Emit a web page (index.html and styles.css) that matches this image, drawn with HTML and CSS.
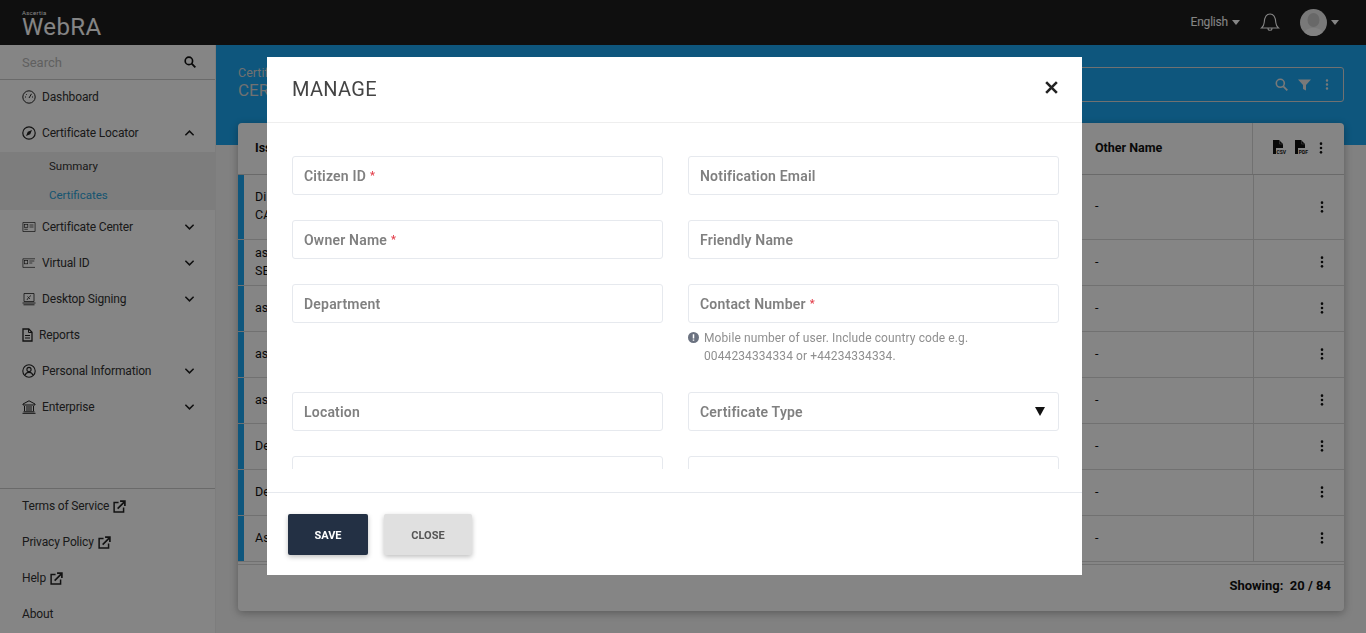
FILE: index.html
```html
<!DOCTYPE html>
<html lang="en">
<head>
<meta charset="utf-8">
<title>WebRA - Certificates</title>
<link rel="stylesheet" href="styles.css">
</head>
<body>
<svg class="defs" width="0" height="0" aria-hidden="true">
  <symbol id="chev-down" viewBox="0 0 12 8"><path d="M1.500 1.500 6 6l4.500-4.500" fill="none" stroke="currentColor" stroke-width="1.700"/></symbol>
  <symbol id="chev-up" viewBox="0 0 12 8"><path d="M1.500 6.500 6 2l4.500 4.500" fill="none" stroke="currentColor" stroke-width="1.700"/></symbol>
  <symbol id="ext" viewBox="0 0 14 14"><path d="M6 2.600H1.200v10.200h10.200V8" fill="none" stroke="currentColor" stroke-width="1.600"/><path d="M5 9.200 12 2.200M7.600 1.200h5.200v5.200" fill="none" stroke="currentColor" stroke-width="1.800"/></symbol>
  <symbol id="dots" viewBox="0 0 4 14"><circle cx="2" cy="2" r="1.600"/><circle cx="2" cy="7" r="1.600"/><circle cx="2" cy="12" r="1.600"/></symbol>
  <symbol id="file" viewBox="0 0 14 15"><path d="M1 0h6L11 4v4H4v6H1z"/><path d="M7.500 .5v3.500H11" fill="none" stroke="#888" stroke-width=".6"/></symbol>
</svg>

<div class="app">
  <header class="topbar">
    <div class="logo">
      <span class="logo-small">Ascertia</span>
      <span class="logo-main">WebRA</span>
    </div>
    <div class="top-actions">
      <span class="lang">English</span><span class="caret"></span>
      <svg class="bell" width="20" height="19" viewBox="0 0 20 19"><path d="M1.500 15c1.700-1.300 2.500-2.800 2.700-5.500C4.500 4.500 6.500 1 10 1s5.500 3.500 5.800 8.500c.2 2.700 1 4.200 2.700 5.500zM8 15.200c0 2.800 4 2.800 4 0" fill="none" stroke="#fff" stroke-width="1.100"/></svg>
      <span class="avatar"><svg width="27" height="27" viewBox="0 0 27 27"><ellipse cx="13.500" cy="11" rx="6" ry="7" fill="#c8c8c8"/><path d="M3 27c1-6 5-8 10.500-8S23 21 24 27z" fill="#f8f8f8"/></svg></span>
      <span class="caret"></span>
    </div>
  </header>

  <div class="layout">
    <aside class="sidebar">
      <div class="side-search">
        <span>Search</span>
        <svg width="12" height="12" viewBox="0 0 13 13"><circle cx="5.300" cy="5.300" r="4" fill="none" stroke="#111" stroke-width="1.800"/><path d="m8.300 8.300 4 4" stroke="#111" stroke-width="2"/></svg>
      </div>
      <nav class="nav">
        <a class="nav-item"><svg class="ico" viewBox="0 0 14 14"><circle cx="7" cy="7" r="6.200" fill="none" stroke="currentColor"/><path d="M7 8 9.500 3.800M3 7h1M10 7h1M4.300 4.300l.7.700" stroke="currentColor" fill="none"/></svg><span>Dashboard</span></a>
        <a class="nav-item"><svg class="ico" viewBox="0 0 14 14"><circle cx="7" cy="7" r="6.200" fill="none" stroke="currentColor" stroke-width="1.200"/><path d="M10 4 8.200 8.200 4 10l1.800-4.200z" fill="currentColor"/></svg><span>Certificate Locator</span><svg class="chev" viewBox="0 0 12 8"><use href="#chev-up"/></svg></a>
        <div class="subnav">
          <a class="sub-item">Summary</a>
          <a class="sub-item active">Certificates</a>
        </div>
        <a class="nav-item"><svg class="ico" viewBox="0 0 14 14"><path d="M.9 2.500h12.200v9H.9z" fill="none" stroke="currentColor" stroke-width=".7"/><rect x="2.300" y="4.300" width="3.500" height="3" fill="none" stroke="currentColor" stroke-width=".7"/><path d="M2.300 9.300h3.500M7.500 5h4M7.500 7h4" stroke="currentColor" stroke-width=".7"/></svg><span>Certificate Center</span><svg class="chev" viewBox="0 0 12 8"><use href="#chev-down"/></svg></a>
        <a class="nav-item"><svg class="ico" viewBox="0 0 14 14"><path d="M13 2.800H.9v8.600H13" fill="none" stroke="currentColor" stroke-width=".7"/><rect x="2.300" y="4.600" width="3.400" height="3.200" fill="none" stroke="currentColor" stroke-width=".7"/><path d="M7.300 5h5M7.300 7h3" stroke="currentColor" stroke-width=".7"/></svg><span>Virtual ID</span><svg class="chev" viewBox="0 0 12 8"><use href="#chev-down"/></svg></a>
        <a class="nav-item"><svg class="ico" viewBox="0 0 14 14"><path d="M2 1.500h10v8H2z" fill="none" stroke="currentColor" stroke-width=".8"/><path d="M5 8c.5-1.500 2-3 4-4.500M5.500 4.500 8 7" fill="none" stroke="currentColor" stroke-width=".8"/><path d="M.5 11h13M1.500 12.800h11" stroke="currentColor" stroke-width=".9"/></svg><span>Desktop Signing</span><svg class="chev" viewBox="0 0 12 8"><use href="#chev-down"/></svg></a>
        <a class="nav-item"><svg class="ico-file" viewBox="0 0 11 14"><path d="M1 1h5.800L10 4.200V13H1z" fill="none" stroke="currentColor" stroke-width="1.300"/><path d="M6.500 1v3.500H10M3 7.500h5M3 10h5" fill="none" stroke="currentColor"/></svg><span>Reports</span></a>
        <a class="nav-item"><svg class="ico" viewBox="0 0 14 14"><circle cx="7" cy="7" r="6.200" fill="none" stroke="currentColor" stroke-width="1.100"/><circle cx="7" cy="5.500" r="2.100" fill="none" stroke="currentColor" stroke-width="1.100"/><path d="M3.200 11c.6-2 2-2.600 3.800-2.600s3.200.6 3.800 2.600" fill="none" stroke="currentColor" stroke-width="1.100"/></svg><span>Personal Information</span><svg class="chev" viewBox="0 0 12 8"><use href="#chev-down"/></svg></a>
        <a class="nav-item"><svg class="ico" viewBox="0 0 14 14"><path d="M7 .8 13 4v1H1V4z" fill="none" stroke="currentColor"/><path d="M2.500 6v5M5 6v5M7 6v5M9 6v5M11.500 6v5M1.500 11.800h11M.5 13.300h13" stroke="currentColor"/></svg><span>Enterprise</span><svg class="chev" viewBox="0 0 12 8"><use href="#chev-down"/></svg></a>
      </nav>
      <div class="side-footer">
        <a class="foot-item">Terms of Service <svg class="ext" viewBox="0 0 14 14"><use href="#ext"/></svg></a>
        <a class="foot-item">Privacy Policy <svg class="ext" viewBox="0 0 14 14"><use href="#ext"/></svg></a>
        <a class="foot-item">Help <svg class="ext" viewBox="0 0 14 14"><use href="#ext"/></svg></a>
        <a class="foot-item">About</a>
      </div>
    </aside>

    <main class="main">
      <div class="band">
        <div class="crumbs">
          <div class="crumb">Certificates</div>
          <div class="page-title">CERTIFICATES</div>
        </div>
        <div class="toolbar">
          <svg width="13" height="13" viewBox="0 0 13 13"><circle cx="5.300" cy="5.300" r="4" fill="none" stroke="#e8e8e8" stroke-width="1.600"/><path d="m8.300 8.300 4 4" stroke="#e8e8e8" stroke-width="1.800"/></svg>
          <svg width="13" height="12" viewBox="0 0 13 12"><path d="M0 .5h13L8 6v5.500L5 10V6z" fill="#e8e8e8"/></svg>
          <svg class="toolbar-dots" width="4" height="11" viewBox="0 0 4 14" fill="#e8e8e8"><use href="#dots"/></svg>
        </div>
      </div>
      <section class="card">
        <div class="row head">
          <div class="cell first">Issuer</div>
          <div class="cell other">Other Name</div>
          <div class="cell actions head-actions">
            <span class="file-ico"><svg width="14" height="15" viewBox="0 0 14 15" fill="#111"><use href="#file"/></svg><b>CSV</b></span>
            <span class="file-ico"><svg width="14" height="15" viewBox="0 0 14 15" fill="#111"><use href="#file"/></svg><b>PDF</b></span>
            <svg class="dots" viewBox="0 0 4 14" fill="#111"><use href="#dots"/></svg>
          </div>
        </div>
        <div class="row tall"><div class="cell first">Di<br>CA</div><div class="cell other">-</div><div class="cell actions"><svg class="dots" viewBox="0 0 4 14" fill="#111"><use href="#dots"/></svg></div></div>
        <div class="row"><div class="cell first">as<br>SE</div><div class="cell other">-</div><div class="cell actions"><svg class="dots" viewBox="0 0 4 14" fill="#111"><use href="#dots"/></svg></div></div>
        <div class="row"><div class="cell first">as</div><div class="cell other">-</div><div class="cell actions"><svg class="dots" viewBox="0 0 4 14" fill="#111"><use href="#dots"/></svg></div></div>
        <div class="row"><div class="cell first">as</div><div class="cell other">-</div><div class="cell actions"><svg class="dots" viewBox="0 0 4 14" fill="#111"><use href="#dots"/></svg></div></div>
        <div class="row"><div class="cell first">as</div><div class="cell other">-</div><div class="cell actions"><svg class="dots" viewBox="0 0 4 14" fill="#111"><use href="#dots"/></svg></div></div>
        <div class="row"><div class="cell first">De</div><div class="cell other">-</div><div class="cell actions"><svg class="dots" viewBox="0 0 4 14" fill="#111"><use href="#dots"/></svg></div></div>
        <div class="row"><div class="cell first">De</div><div class="cell other">-</div><div class="cell actions"><svg class="dots" viewBox="0 0 4 14" fill="#111"><use href="#dots"/></svg></div></div>
        <div class="row"><div class="cell first">As</div><div class="cell other">-</div><div class="cell actions"><svg class="dots" viewBox="0 0 4 14" fill="#111"><use href="#dots"/></svg></div></div>
        <div class="card-foot">Showing:&nbsp; 20 / 84</div>
      </section>
    </main>
  </div>
</div>

<div class="backdrop"></div>

<div class="modal">
  <div class="modal-head">
    <h2>MANAGE</h2>
    <svg class="close" width="15" height="15" viewBox="0 0 14 14"><path d="m2 2 10 10M12 2 2 12" stroke="#222" stroke-width="2.400"/></svg>
  </div>
  <div class="modal-body">
    <div class="form-grid">
      <div class="field"><div class="input">Citizen ID<i>*</i></div></div>
      <div class="field"><div class="input">Notification Email</div></div>
      <div class="field"><div class="input">Owner Name<i>*</i></div></div>
      <div class="field"><div class="input">Friendly Name</div></div>
      <div class="field"><div class="input">Department</div></div>
      <div class="field">
        <div class="input">Contact Number<i>*</i></div>
        <div class="hint">
          <svg width="11" height="11" viewBox="0 0 11 11"><circle cx="5.500" cy="5.500" r="5.500" fill="#6b7280"/><path d="M5.500 2.300v4.200M5.500 7.500v1.300" stroke="#fff" stroke-width="1.500"/></svg>
          <span>Mobile number of user. Include country code e.g. 0044234334334 or +44234334334.</span>
        </div>
      </div>
      <div class="field"><div class="input">Location</div></div>
      <div class="field"><div class="input select">Certificate Type<span class="tri"></span></div></div>
      <div class="field"><div class="input"></div></div>
      <div class="field"><div class="input"></div></div>
    </div>
  </div>
  <div class="modal-foot">
    <button class="btn primary">SAVE</button>
    <button class="btn ghost">CLOSE</button>
  </div>
</div>
</body>
</html>
```

FILE: styles.css
```css
* { box-sizing: border-box; }
html, body { height: 100%; }
body { margin: 0; overflow: hidden; font-family: Roboto, "Liberation Sans", sans-serif; color: #222; background: #f7f7f7; }
a { color: inherit; text-decoration: none; }
.defs { position: absolute; }

.app { height: 633px; display: flex; flex-direction: column; }
.topbar { height: 45px; flex: none; background: #1e1e1e; display: flex; justify-content: space-between; align-items: center; padding: 0 27px 0 22px; }
.logo { display: flex; flex-direction: column; line-height: 1; color: #fff; padding-top: 3px; }
.logo-small { font-size: 6px; height: 5px; line-height: 5px; letter-spacing: .3px; margin-bottom: 1px; }
.logo-main { font-size: 24px; font-weight: 400; letter-spacing: .4px; line-height: 22px; color: #fff; }
.top-actions { display: flex; align-items: center; }
.lang { font-size: 12px; letter-spacing: -.2px; color: #fff; padding-bottom: 2px; }
.caret { width: 0; height: 0; border-left: 4px solid transparent; border-right: 4px solid transparent; border-top: 5px solid #fff; margin-left: 4px; }
.bell { margin: 0 20px 0 20px; }
.avatar { width: 27px; height: 27px; border-radius: 50%; background: #e8e8e8; overflow: hidden; display: block; }
.avatar svg { display: block; }

.layout { flex: 1; display: flex; min-height: 0; }
.sidebar { width: 216px; flex: none; background: #ffffff; border-right: 1px solid #f0f0f0; display: flex; flex-direction: column; }
.side-search { height: 35px; flex: none; border-bottom: 1px solid #ccc; display: flex; align-items: center; justify-content: space-between; padding: 0 19px 0 22px; font-size: 13px; color: #b8b8b8; }
.nav { flex: 1; }
.nav-item { height: 36px; display: flex; align-items: center; padding: 0 20px 2px 22px; font-size: 12px; letter-spacing: -.15px; color: #333; gap: 6px; }
.nav-item span { flex: 1; }
.ico { width: 14px; height: 14px; flex: none; color: #222; }
.ico-file { width: 11px; height: 14px; flex: none; color: #222; }
.chev { width: 11px; height: 8px; flex: none; color: #222; }
.subnav { background: #efefef; height: 58px; display: flex; flex-direction: column; }
.sub-item { height: 29px; display: flex; align-items: center; padding: 0 0 2px 49px; font-size: 11.500px; color: #333; }
.sub-item.active { color: #2ca3d8; }
.side-footer { height: 145px; flex: none; border-top: 1px solid #ccc; }
.foot-item { height: 36px; display: flex; align-items: center; gap: 4px; padding: 0 0 2px 22px; font-size: 12px; letter-spacing: -.15px; color: #333; }
.ext { width: 13px; height: 13px; color: #222; }

.main { flex: 1; min-width: 0; position: relative; background: #f7f7f7; padding: 0 22px 0 22px; }
.band { height: 100px; margin: 0 -22px -22px; background: #1ba6f0; padding: 22px 22px 0; display: flex; justify-content: space-between; }
.crumbs { margin-top: -1px; }
.crumb { font-size: 12.500px; color: #d8d8d8; line-height: 14px; }
.page-title { font-size: 17px; color: #d8d8d8; line-height: 20px; }
.toolbar { width: 400px; height: 35px; border: 1px solid #d8d8d8; border-radius: 3px; display: flex; align-items: center; justify-content: flex-end; gap: 10px; padding-right: 14px; }
.toolbar-dots { margin-left: 4px; }
.card { position: relative; background: #ffffff; border-radius: 4px; box-shadow: 0 2px 8px rgba(0,0,0,.3); height: 488px; display: flex; flex-direction: column; }
.row { display: flex; height: 46px; flex: none; border-bottom: 1px solid #d8d8d8; }
.row.head { height: 52px; border-bottom: 1px solid #ccc; }
.row.tall { height: 65px; }
.cell { display: flex; align-items: center; font-size: 12.500px; color: #111; line-height: 18px; padding-bottom: 2px; }
.first { flex: 1; padding-left: 11px; border-left: 6px solid #1ba6f0; }
.head .first { border-left: 0; padding-left: 17px; font-weight: 700; }
.other { width: 158px; }
.head .other { width: 157px; font-weight: 700; }
.actions { width: 91px; border-left: 1px solid #d8d8d8; justify-content: flex-end; padding-right: 20px; padding-bottom: 1px; }
.head-actions { width: 92px; padding-right: 21px; gap: 8px; padding-bottom: 2px; }
.dots { width: 4px; height: 12px; }
.head-actions .dots { margin-left: 3px; }
.file-ico { position: relative; width: 14px; height: 15px; display: block; }
.file-ico svg { display: block; }
.file-ico b { position: absolute; right: 0; bottom: 0; font-size: 5px; line-height: 6px; color: #111; }
.card-foot { flex: 1; border-top: 1px solid #d8d8d8; margin-top: 2px; display: flex; align-items: center; justify-content: flex-end; padding: 0 13px 5px 0; font-size: 13px; font-weight: 700; color: #111; }

.backdrop { position: fixed; inset: 0; background: rgba(0,0,0,.48); }
.modal { position: fixed; left: 267px; top: 57px; width: 815px; height: 518px; background: #fff; display: flex; flex-direction: column; filter: blur(.6px); }
.modal-head { height: 66px; flex: none; border-bottom: 1px solid #eee; display: flex; align-items: center; justify-content: space-between; padding: 0 23px 4px 25px; }
.modal-head h2 { margin: 2px 0 0; font-size: 20px; font-weight: 400; letter-spacing: .3px; color: #444; }
.modal-body { height: 346px; flex: none; overflow: hidden; padding: 33px 23px 0 25px; }
.form-grid { display: grid; grid-template-columns: 371px 371px; column-gap: 25px; row-gap: 25px; }
.input { height: 39px; border: 1px solid #e6e9ee; border-radius: 3px; display: flex; align-items: center; padding: 0 13px 0 11px; font-size: 14px; font-weight: 600; letter-spacing: .2px; color: #808080; }
.input i { color: #e3414d; font-style: normal; font-size: 11px; margin-left: 4px; }
.select { justify-content: space-between; }
.tri { width: 0; height: 0; border-left: 5px solid transparent; border-right: 5px solid transparent; border-top: 9px solid #111; }
.hint { display: flex; gap: 5px; padding-top: 6px; font-size: 12px; letter-spacing: .1px; line-height: 18px; color: #8f8f8f; height: 44px; width: 300px; }
.hint svg { flex: none; margin-top: 3px; }
.modal-foot { flex: 1; border-top: 1px solid #e6e9ee; margin-top: 23px; display: flex; align-items: flex-start; gap: 16px; padding: 21px 0 0 21px; }
.btn { height: 41px; border: 0; border-radius: 2px; padding-top: 2px; font: 700 11px Roboto, sans-serif; box-shadow: 0 2px 5px rgba(0,0,0,.25); }
.primary { width: 80px; background: #233044; color: #fff; }
.ghost { width: 88px; background: #e0e0e0; color: #555; }
```
